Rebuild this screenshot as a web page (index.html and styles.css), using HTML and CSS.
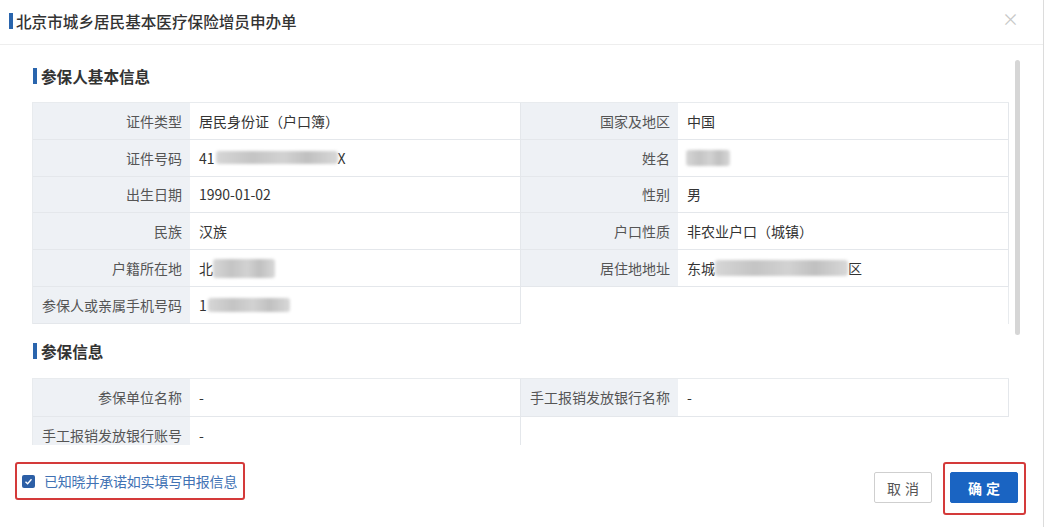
FILE: index.html
```html
<!DOCTYPE html>
<html lang="zh-CN">
<head>
<meta charset="utf-8">
<title>北京市城乡居民基本医疗保险增员申办单</title>
<link rel="stylesheet" href="styles.css">
</head>
<body>
<div class="dialog">
  <div class="header">
    <div class="title"><span class="bar"></span>北京市城乡居民基本医疗保险增员申办单</div>
    <span class="close">×</span>
  </div>
  <div class="body">
    <div class="content">
      <div class="section-title"><span class="bar small"></span>参保人基本信息</div>
      <div class="table">
        <div class="lbl">证件类型</div><div class="val">居民身份证（户口簿）</div>
        <div class="lbl">国家及地区</div><div class="val">中国</div>
        <div class="lbl">证件号码</div><div class="val">41<span class="blur b-id"></span>X</div>
        <div class="lbl">姓名</div><div class="val"><span class="blur b-name"></span></div>
        <div class="lbl">出生日期</div><div class="val">1990-01-02</div>
        <div class="lbl">性别</div><div class="val">男</div>
        <div class="lbl">民族</div><div class="val">汉族</div>
        <div class="lbl">户口性质</div><div class="val">非农业户口（城镇）</div>
        <div class="lbl">户籍所在地</div><div class="val">北<span class="blur b-addr"></span></div>
        <div class="lbl">居住地地址</div><div class="val">东城<span class="blur b-home"></span>区</div>
        <div class="lbl">参保人或亲属手机号码</div><div class="val">1<span class="blur b-phone"></span></div>
        <div class="empty edge"></div>
      </div>
      <div class="section-title second"><span class="bar small"></span>参保信息</div>
      <div class="table tall">
        <div class="lbl">参保单位名称</div><div class="val">-</div>
        <div class="lbl">手工报销发放银行名称</div><div class="val">-</div>
        <div class="lbl last">手工报销发放银行账号</div><div class="val last">-</div>
        <div class="empty"></div>
      </div>
    </div>
    <div class="scrollbar"></div>
  </div>
  <div class="footer">
    <label class="agree">
      <span class="checkbox"><svg viewBox="0 0 12 12" width="9" height="9"><path d="M2 6.2 L4.8 9 L10 3" fill="none" stroke="#fff" stroke-width="1.8"/></svg></span>
      已知晓并承诺如实填写申报信息
    </label>
    <div class="actions">
      <button class="btn cancel">取消</button>
      <div class="highlight"><button class="btn ok">确定</button></div>
    </div>
  </div>
</div>
</body>
</html>
```
FILE: styles.css
```css
* { box-sizing: border-box; }
html, body { margin: 0; padding: 0; background: #fff; }
body {
  font-family: "Noto Sans CJK SC", "Noto Sans", "Liberation Sans", sans-serif;
  color: #333;
  width: 1047px;
  height: 527px;
  overflow: hidden;
}
.dialog {
  width: 1044px;
  height: 527px;
  border-right: 1px solid #dcdcdc;
  display: flex;
  flex-direction: column;
}
.header {
  height: 45px;
  border-bottom: 1px solid #eeeeee;
  display: flex;
  align-items: center;
  justify-content: space-between;
  padding: 0 24px 0 9px;
}
.title {
  display: flex;
  align-items: center;
  font-size: 15.6px;
  font-weight: 500;
  color: #333;
  margin-top: -3px;
}
.bar {
  display: inline-block;
  width: 4px;
  height: 16px;
  background: #2a65ad;
  margin-right: 3px;
}
.close {
  font-size: 17px;
  color: #c8c8c8;
  line-height: 1;
  margin-top: -8px;
}
.body {
  height: 400px;
  overflow: hidden;
  display: flex;
}
.content {
  margin-left: 32px;
  width: 977px;
}
.section-title {
  display: flex;
  align-items: center;
  font-size: 15.6px;
  font-weight: 700;
  color: #333;
  height: 20px;
  margin-top: 21px;
  margin-bottom: 16px;
}
.section-title .bar { margin-left: 1px; margin-right: 4px; }
.section-title.second { margin-top: 17px; margin-bottom: 17px; }
.table {
  display: grid;
  grid-template-columns: 157px 331px 157px 331px;
  grid-auto-rows: 36.8px;
  border-top: 1px solid #e8ebee;
  border-left: 1px solid #e8ebee;
  font-size: 14px;
  line-height: 1;
}
.table.tall { grid-auto-rows: 38px; }
.lbl {
  background: #eef1f5;
  color: #555;
  text-align: right;
  padding-right: 8px;
  display: flex;
  align-items: center;
  justify-content: flex-end;
  border-bottom: 1px solid #e4e7eb;
  white-space: nowrap;
}
.val {
  background: #fff;
  color: #333;
  padding-left: 9px;
  display: flex;
  align-items: center;
  border-bottom: 1px solid #e4e7eb;
  border-right: 1px solid #e4e7eb;
  white-space: nowrap;
}
.lbl.last, .val.last { align-items: flex-start; padding-top: 11px; }
.empty { grid-column: span 2; background: #fff; }
.empty.edge { border-right: 1px solid #e8ebee; }
.blur {
  display: inline-block;
  height: 13px;
  background: linear-gradient(90deg, #d6d6d6, #c4c4c4 30%, #d2d2d2 55%, #c0c0c0 75%, #d8d8d8);
  filter: blur(1.5px);
  border-radius: 3px;
}
.b-id { width: 122px; margin-left: 1px; }
.b-name { width: 44px; height: 16px; margin-left: -1px; }
.b-addr { width: 62px; height: 19px; margin-left: 0; }
.b-home { width: 133px; height: 16px; }
.b-phone { width: 82px; height: 14px; margin-left: 1px; }
.scrollbar {
  width: 5px;
  height: 275px;
  margin-top: 15px;
  margin-left: 6px;
  background: #d6d6d6;
  border-radius: 3px;
}
.footer {
  flex: 1;
  display: flex;
  justify-content: space-between;
  align-items: flex-start;
  padding: 17px 17px 0 15px;
}
.agree {
  display: flex;
  align-items: center;
  width: 230px;
  height: 38px;
  border: 2px solid #d43a3a;
  border-radius: 3px;
  padding-left: 5px;
  font-size: 14px;
  color: #4172b4;
  gap: 9px;
  letter-spacing: -0.2px;
}
.checkbox {
  width: 13px;
  height: 13px;
  background: #2c5fa6;
  border-radius: 2px;
  display: inline-flex;
  align-items: center;
  justify-content: center;
  margin-top: 1px;
}
.actions {
  display: flex;
  align-items: flex-start;
  gap: 11px;
}
.btn {
  font-family: "Noto Sans CJK SC", "Noto Sans", sans-serif;
  font-size: 14px;
  height: 31px;
  border-radius: 2px;
  padding: 0;
  letter-spacing: 4px;
  text-indent: 4px;
}
.cancel {
  margin-top: 10px;
  width: 58px;
  background: #fff;
  border: 1px solid #cfcfcf;
  color: #555;
}
.highlight {
  border: 2px solid #d43a3a;
  border-radius: 3px;
  padding: 8px 6px 10px 5px;
}
.ok {
  display: block;
  width: 68px;
  background: #1a64c2;
  border: 1px solid #1a64c2;
  color: #fff;
  font-weight: 700;
}
```
